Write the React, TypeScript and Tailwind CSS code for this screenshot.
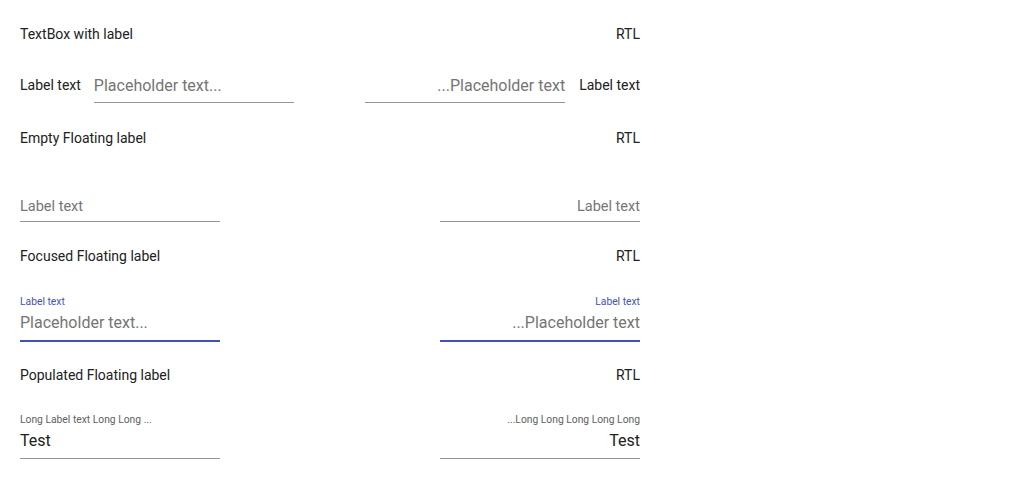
import React from 'react';

const Header = ({ title, className }: { title: string; className: string }) => (
  <div className={`flex justify-between text-[14px] leading-5 text-[#212121] ${className}`}>
    <span>{title}</span>
    <span>RTL</span>
  </div>
);

export default function App() {
  return (
    <div className="w-[1024px] h-[479px] bg-white font-['Roboto',sans-serif]">
      <div className="w-[620px] ml-[20px] flex flex-col">
        {/* TextBox with label */}
        <Header title="TextBox with label" className="mt-[24px]" />
        <div className="mt-[31px] flex justify-between">
          <div className="flex">
            <span className="text-[14px] leading-5 text-[#212121] mr-[13px]">Label text</span>
            <div className="w-[200px] border-b border-[#949494] pt-[1px] pb-[6px] text-[16px] leading-5 text-[#757575]">
              Placeholder text...
            </div>
          </div>
          <div className="flex">
            <div className="w-[200px] border-b border-[#949494] pt-[1px] pb-[6px] text-[16px] leading-5 text-[#757575] text-right">
              ...Placeholder text
            </div>
            <span className="text-[14px] leading-5 text-[#212121] ml-[14px]">Label text</span>
          </div>
        </div>

        {/* Empty floating */}
        <Header title="Empty Floating label" className="mt-[25px]" />
        <div className="mt-[49px] flex justify-between">
          <div className="w-[200px] border-b border-[#949494] pb-[4px] text-[14.5px] leading-5 text-[#757575]">Label text</div>
          <div className="w-[200px] border-b border-[#949494] pb-[4px] text-[14.5px] leading-5 text-[#757575] text-right">Label text</div>
        </div>

        {/* Focused floating */}
        <Header title="Focused Floating label" className="mt-[24px]" />
        <div className="mt-[30px] flex justify-between">
          <div className="w-[200px] border-b-2 border-[#3f51b5] pb-[7px]">
            <div className="text-[10.3px] leading-3 text-[#3f51b5]">Label text</div>
            <div className="mt-[5px] text-[16px] leading-5 text-[#757575]">Placeholder text...</div>
          </div>
          <div className="w-[200px] border-b-2 border-[#3f51b5] pb-[7px] text-right">
            <div className="text-[10.3px] leading-3 text-[#3f51b5]">Label text</div>
            <div className="mt-[5px] text-[16px] leading-5 text-[#757575]">...Placeholder text</div>
          </div>
        </div>

        {/* Populated floating */}
        <Header title="Populated Floating label" className="mt-[23px]" />
        <div className="mt-[29px] flex justify-between">
          <div className="w-[200px] border-b border-[#949494] pb-[7px]">
            <div className="text-[10.3px] leading-3 text-[#616161]">Long Label text Long Long ...</div>
            <div className="mt-[5px] text-[16px] leading-5 text-[#212121]">Test</div>
          </div>
          <div className="w-[200px] border-b border-[#949494] pb-[7px] text-right">
            <div className="text-[10.3px] leading-3 text-[#616161]">...Long Long Long Long Long</div>
            <div className="mt-[5px] text-[16px] leading-5 text-[#212121]">Test</div>
          </div>
        </div>
      </div>
    </div>
  );
}
